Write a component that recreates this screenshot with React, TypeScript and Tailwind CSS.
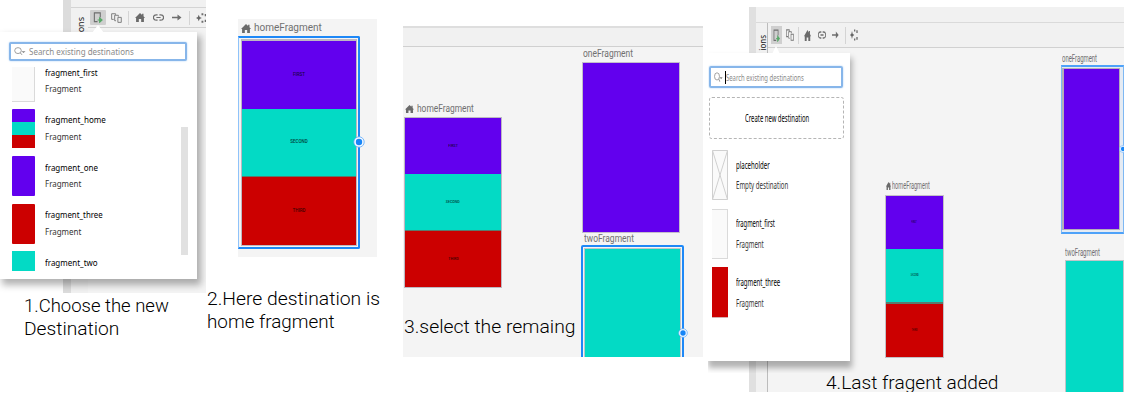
import { useLayoutEffect, useRef } from "react";
import type { ReactNode } from "react";

/* Single line of text stretched or squeezed to fill its box horizontally. */
function Fit({ children, className = "" }: { children: string; className?: string }) {
  const box = useRef<HTMLDivElement>(null);
  const text = useRef<HTMLSpanElement>(null);
  useLayoutEffect(() => {
    if (!box.current || !text.current) return;
    const scale = box.current.clientWidth / text.current.offsetWidth;
    text.current.style.transform = `scaleX(${scale})`;
  }, []);
  return (
    <div ref={box} className={`whitespace-nowrap ${className}`}>
      <span ref={text} className="inline-block origin-left">{children}</span>
    </div>
  );
}

const caption = "h-[22px] font-['Roboto',sans-serif] text-[19px] leading-[22px] font-light text-black";
const nodeLabel = "h-3 font-['Roboto',sans-serif] text-[10px] leading-3 text-[#707070]";

function Home({ className = "" }: { className?: string }) {
  return (
    <svg viewBox="0 0 12 11" preserveAspectRatio="none" className={`shrink-0 fill-[#6a6a6a] ${className}`}>
      <path d="M6 0 8.5 2.4V1H10.2V4L12 6.2H10.7V11H7.4V7.4H4.6V11H1.3V6.2H0Z" />
    </svg>
  );
}

function NewDestination({ className = "" }: { className?: string }) {
  return (
    <svg viewBox="0 0 11 12" preserveAspectRatio="none" fill="none" className={`shrink-0 ${className}`}>
      <path d="M8 6V1H1.5V10.5H5" stroke="#6e6e6e" strokeWidth="1.2" />
      <path d="M5 8.8H9.5M7.3 6.5V11.2L10 8.8Z" stroke="#59a869" strokeWidth="1.2" fill="#59a869" />
    </svg>
  );
}

function Nested({ className = "" }: { className?: string }) {
  return (
    <svg viewBox="0 0 12 11" preserveAspectRatio="none" fill="none" stroke="#777" className={`shrink-0 ${className}`}>
      <path d="M3 7H.7V.8H5V2M4 8.5V2.5H8V4M5.5 8.5H4M7.5 4.8H11.2V10.3H7.5Z" />
    </svg>
  );
}

function LinkIcon({ className = "" }: { className?: string }) {
  return (
    <svg viewBox="0 0 12 8" preserveAspectRatio="none" fill="none" stroke="#6e6e6e" strokeWidth="1.3" className={`shrink-0 ${className}`}>
      <path d="M5 1H3.5A2.8 2.8 0 0 0 3.5 7H5M7 1H8.5A2.8 2.8 0 0 1 8.5 7H7M3.7 4H8.3" />
    </svg>
  );
}

function Arrow({ className = "" }: { className?: string }) {
  return (
    <svg viewBox="0 0 10 8" preserveAspectRatio="none" className={`shrink-0 ${className}`}>
      <path d="M0 3.2H5.5V.5L9.5 4 5.5 7.5V4.8H0Z" fill="#6e6e6e" />
    </svg>
  );
}

function Arrange({ className = "" }: { className?: string }) {
  return (
    <svg viewBox="0 0 12 11" preserveAspectRatio="none" className={`shrink-0 ${className}`}>
      <path d="M3 1.8 4 4.4 6.4 5.5 4 6.6 3 9.2 2 6.6 0 5.5 2 4.4Z" fill="#666" />
      <path d="M6 .4H8V2.4H6ZM9.5 1.2H11.5V3.6H9.5ZM6 8.6H8V10.6H6ZM9.5 7.4H11.5V9.8H9.5Z" fill="#6e6e6e" />
    </svg>
  );
}

function Magnifier({ className = "" }: { className?: string }) {
  return (
    <svg viewBox="0 0 12 10" preserveAspectRatio="none" fill="none" className={`shrink-0 ${className}`}>
      <circle cx="4" cy="4" r="3.3" stroke="#909090" strokeWidth=".9" />
      <path d="M6.3 6.5 8 8.7" stroke="#909090" />
      <path d="M7.5 4.7H11.5L9.5 6.7Z" fill="#808080" />
    </svg>
  );
}

function Handle({ className = "" }: { className?: string }) {
  return (
    <svg viewBox="0 0 12 12" className={`absolute ${className}`}>
      <circle cx="6" cy="6" r="5.2" fill="#f4f8ff" stroke="#5aa9fb" strokeWidth=".8" />
      <circle cx="6" cy="6" r="3.2" fill="#1886f7" />
    </svg>
  );
}

function Bands({ className = "", labels = "", seam = "border-b" }: { className?: string; labels?: string; seam?: string }) {
  return (
    <div className={`flex flex-col ${className}`}>
      <div className="flex flex-1 items-center justify-center bg-[#6200ee]"><span className={labels}>FIRST</span></div>
      <div className={`flex flex-1 items-center justify-center border-[#5b7a6c] bg-[#03dac5] ${seam}`}><span className={labels}>SECOND</span></div>
      <div className="flex flex-1 items-center justify-center bg-[#cc0000]"><span className={labels}>THIRD</span></div>
    </div>
  );
}

const tiny = "font-['Roboto',sans-serif] text-[4.5px] leading-none font-medium text-black/75";

function Row({ thumb, title, width, sub = true }: { thumb: ReactNode; title: string; width: string; sub?: boolean }) {
  return (
    <div className="flex h-[47.5px] shrink-0 gap-[10px] pl-3 font-['Noto_Sans',sans-serif] text-[9.5px]">
      {thumb}
      <div className="flex flex-col pt-[4.5px]">
        <Fit className={`h-[13px] leading-[13px] text-black ${width}`}>{title}</Fit>
        {sub && <Fit className="mt-[3.5px] h-[13px] w-9 leading-[13px] text-[#333]">Fragment</Fit>}
      </div>
    </div>
  );
}

function TallRow({ thumb, title, width, sub, subWidth, className }: { thumb: ReactNode; title: string; width: string; sub: string; subWidth: string; className: string }) {
  return (
    <div className="flex h-[58.5px] shrink-0 gap-2 pl-1 font-['Noto_Sans',sans-serif] text-[10px]">
      {thumb}
      <div className={`flex flex-col ${className}`}>
        <Fit className={`h-3.5 leading-[14px] text-black ${width}`}>{title}</Fit>
        <Fit className={`h-3.5 leading-[14px] text-[#333] ${subWidth}`}>{sub}</Fit>
      </div>
    </div>
  );
}

function ChooseFigure() {
  return (
    <figure className="relative h-full w-[206px] shrink-0">
      <div className="ml-[63px] flex h-[293px] overflow-hidden bg-[#f4f4f4]">
        <div className="w-2 shrink-0 bg-[#dcdcdc]" />
        <div className="flex flex-1 flex-col">
          <div className="h-2 shrink-0 border-b border-[#d4d4d4] bg-[#f1f1f1]" />
          <div className="flex h-full bg-[#f1f1f1]">
            <div className="flex h-[26px] w-[17px] shrink-0 items-start justify-center overflow-hidden pt-[9px] pl-[3px]">
              <span className="rotate-180 font-['Noto_Sans',sans-serif] text-[9px] leading-3 text-[#222] [writing-mode:vertical-rl]">ons</span>
            </div>
            <div className="flex-1">
              <div className="flex h-5 items-center border-b border-[#d1d1d1]">
                <div className="ml-[2px] flex h-[15px] w-4 shrink-0 items-center justify-center rounded-[1px] bg-[#cfcfcf]"><NewDestination className="h-[11px] w-[10px]" /></div>
                <Nested className="ml-[5px] h-[10px] w-[11px]" />
                <div className="ml-[6px] h-[14px] w-px shrink-0 bg-[#d4d4d4]" />
                <Home className="ml-[6px] h-[9px] w-[10px]" />
                <LinkIcon className="ml-2 h-[7px] w-[11px]" />
                <Arrow className="ml-2 h-[7px] w-[10px]" />
                <div className="ml-[7px] h-[14px] w-px shrink-0 bg-[#d4d4d4]" />
                <Arrange className="ml-[6px] h-[10px] w-[11px]" />
              </div>
              <div className="h-full bg-[#f4f4f4]" />
            </div>
          </div>
        </div>
      </div>
      <div className="absolute top-[25px] left-0 h-[268px] w-[206px] overflow-hidden">
        <svg viewBox="0 0 12 8" className="absolute top-0 left-[92px] h-2 w-3 fill-white"><path d="M0 8 6 0 12 8Z" /></svg>
        <div className="mt-[7px] flex h-[247px] w-[197px] flex-col bg-white pt-[10px] shadow-[3px_5px_7px_1px_rgba(0,0,0,0.3)]">
          <div className="ml-[9px] flex h-[19px] w-[178px] shrink-0 items-center rounded-[2px] border-2 border-[#87b6ea] bg-white pl-[3px] shadow-[0_0_2px_#a8cdf5]">
            <Magnifier className="h-[9px] w-3" />
            <Fit className="ml-[3px] w-[105px] font-['Noto_Sans',sans-serif] text-[9.5px] leading-3 text-[#8a8a8a]">Search existing destinations</Fit>
          </div>
          <div className="flex min-h-0 flex-1">
            <div className="mt-[6px] flex h-[205px] w-[181px] shrink-0 flex-col overflow-hidden">
              <div className="-mt-[7px] flex flex-col pt-[1px]">
                <Row title="fragment_first" width="w-[53px]" thumb={<div className="mt-[6px] h-[35px] w-[23px] border-r border-b border-[#dadada] bg-[#fafafa]" />} />
                <Row title="fragment_home" width="w-[61px]" thumb={<Bands className="h-10 w-[23px] overflow-hidden rounded-[1px]" labels="hidden" seam="" />} />
                <Row title="fragment_one" width="w-[53px]" thumb={<div className="h-[39.5px] w-[23px] rounded-[1px] bg-[#6200ee]" />} />
                <Row title="fragment_three" width="w-[58px]" thumb={<div className="h-10 w-[23px] rounded-[1px] bg-[#cc0000]" />} />
                <Row title="fragment_two" width="w-[53px]" sub={false} thumb={<div className="h-[19.5px] w-[23px] bg-[#03dac5]" />} />
              </div>
            </div>
            <div className="mt-[66px] h-[128px] w-[7px] bg-[#e1e1e1]" />
          </div>
        </div>
      </div>
      <figcaption className="mt-[2px] ml-6">
        <Fit className={`w-[145px] ${caption}`}>1.Choose the new</Fit>
        <Fit className={`mt-[1px] w-[95px] ${caption}`}>Destination</Fit>
      </figcaption>
    </figure>
  );
}

function HomeFigure() {
  return (
    <figure className="flex h-full w-[197px] shrink-0 flex-col">
      <div className="mt-[19px] ml-8 h-[238px] w-[139px] bg-[#f4f4f4]">
        <div className="flex h-[16.5px] items-center gap-[3px] pt-[2px] pl-[3px]">
          <Home className="h-[9px] w-[10px]" />
          <Fit className={`w-[68px] ${nodeLabel}`}>homeFragment</Fit>
        </div>
        <div className="relative h-[213px] w-[122px] rounded-r-[2px] border-2 border-l border-[#1e88f7] border-l-[#8fc3fa] pt-[1.5px] pl-[2px]">
          <Bands className="h-[207px] w-[116px] border border-t-2 border-[#bdb8c2]" labels={tiny} />
          <Handle className="top-[98px] -right-[7px] h-3 w-3" />
        </div>
      </div>
      <figcaption className="mt-[31px] ml-[1px]">
        <Fit className={`w-[173px] ${caption}`}>2.Here destination is</Fit>
        <Fit className={`mt-[1px] w-[128px] ${caption}`}>home fragment</Fit>
      </figcaption>
    </figure>
  );
}

function RemainingFigure() {
  return (
    <figure className="mt-[26px] flex h-[331px] w-[300px] shrink-0 flex-col overflow-hidden bg-[#f4f4f4]">
      <div className="h-[21px] shrink-0 border-t-2 border-b border-t-[#dedede] border-b-[#d0d0d0] bg-[#f1f1f1]" />
      <div className="relative flex-1 overflow-hidden">
        <div className="absolute top-[54px] left-[1px]">
          <div className="flex h-4 items-center gap-[3px] pl-[1px]">
            <Home className="h-2 w-[9px]" />
            <Fit className={`w-[57px] ${nodeLabel}`}>homeFragment</Fit>
          </div>
          <Bands className="h-[171px] w-[98px] border border-[#bdb8c2]" labels={`${tiny} scale-x-80 scale-y-85`} />
        </div>
        <div className="absolute top-[1px] left-[179px]">
          <Fit className={`ml-[1px] w-[50px] ${nodeLabel}`}>oneFragment</Fit>
          <div className="mt-[2px] h-[171px] w-[98px] border border-[#c3bdcb] bg-[#6200ee]" />
        </div>
        <div className="absolute top-[186px] left-[178px]">
          <Fit className={`ml-[3px] w-[50px] ${nodeLabel}`}>twoFragment</Fit>
          <div className="relative h-[130px] w-[103px] rounded-[2px] border-2 border-[#1e88f7] pt-[1px] pl-[1px]">
            <div className="h-[130px] w-[97px] border border-[#c2c5c9] bg-[#03dac5]" />
            <Handle className="top-[81px] -right-[6px] h-[10px] w-[10px]" />
          </div>
        </div>
        <figcaption className="absolute top-[269px] left-[1px]">
          <Fit className={`w-[172px] ${caption}`}>3.select the remaing</Fit>
        </figcaption>
      </div>
    </figure>
  );
}

function LastFigure() {
  return (
    <figure className="relative ml-[5px] h-full w-[416px] shrink-0">
      <div className="mt-[7px] ml-[41px] flex h-[385px] overflow-hidden">
        <div className="w-[7px] shrink-0 bg-[#e0e0e0]" />
        <div className="flex min-w-0 flex-1 flex-col">
          <div className="h-4 shrink-0 border-b border-[#dadada] bg-[#f1f1f1]" />
          <div className="flex min-h-0 flex-1">
            <div className="flex w-3 shrink-0 items-start justify-center border-r border-[#bcbcbc] bg-[#f1f1f1] pt-3 pl-[2px]">
              <span className="rotate-180 font-['Noto_Sans',sans-serif] text-[8px] leading-[10px] text-[#222] [writing-mode:vertical-rl]">ions</span>
            </div>
            <div className="flex min-w-0 flex-1 flex-col">
              <div className="flex h-[25px] shrink-0 items-center border-b border-[#d1d1d1] bg-[#f1f1f1]">
                <div className="ml-[3px] flex h-[18px] w-[11px] items-center justify-center bg-[#cfcfcf]"><NewDestination className="h-[13px] w-[7px]" /></div>
                <Nested className="ml-1 h-3 w-2" />
                <div className="ml-1 h-[17px] w-px bg-[#d4d4d4]" />
                <Home className="ml-[5px] h-[11px] w-[7px]" />
                <LinkIcon className="ml-[7px] h-2 w-[8px]" />
                <Arrow className="ml-[6px] h-2 w-[7px]" />
                <div className="ml-[6px] h-[17px] w-px bg-[#d4d4d4]" />
                <Arrange className="ml-1 h-3 w-2" />
              </div>
              <div className="relative flex-1 overflow-hidden bg-[#f4f4f4]">
                <div className="absolute top-[132px] left-[117px]">
                  <div className="flex h-[15px] items-start gap-[1px] pl-[1px]">
                    <Home className="mt-[2px] h-2 w-[5px]" />
                    <Fit className={`w-[38px] ${nodeLabel}`}>homeFragment</Fit>
                  </div>
                  <Bands className="h-[163px] w-[59px] border border-[#c3c0c6]" labels={`${tiny} scale-x-45 scale-y-80`} seam="border-b-2" />
                </div>
                <div className="absolute top-[5px] left-[293px]">
                  <Fit className={`ml-[1px] w-[35px] ${nodeLabel}`}>oneFragment</Fit>
                  <div className="relative h-[169px] w-[63px] border border-y-2 border-[#7eb8f3] border-y-[#4ea2f9] bg-[#e5ebf3] p-[2px] pt-[1px] pr-[3px] pl-0">
                    <div className="h-full w-full border border-l-2 border-[#b3afb9] bg-[#6200ee]" />
                    <Handle className="top-[78px] -right-[4px] h-2 w-2" />
                  </div>
                </div>
                <div className="absolute top-[199px] left-[297px]">
                  <Fit className={`w-[35px] ${nodeLabel}`}>twoFragment</Fit>
                  <div className="mt-[1px] h-[140px] w-[59px] border border-[#c2c5c9] bg-[#03dac5]" />
                </div>
                <figcaption className="absolute top-[324px] left-[58px]">
                  <Fit className={`w-[172px] ${caption}`}>4.Last fragent added</Fit>
                </figcaption>
              </div>
            </div>
          </div>
        </div>
      </div>
      <div className="absolute top-[46px] left-0 h-[327px] w-[153px] overflow-hidden">
        <svg viewBox="0 0 8 8" className="absolute top-0 left-[64px] h-2 w-2 fill-white"><path d="M0 8 4 0 8 8Z" /></svg>
        <div className="mt-[7px] flex h-[308px] w-[142px] flex-col bg-white pt-[13px] shadow-[1px_6px_6px_1px_rgba(0,0,0,0.3)]">
          <div className="ml-[1px] flex h-[22px] w-[134px] shrink-0 items-center rounded-[2px] border-2 border-[#87b6ea] pl-[3px] shadow-[0_0_2px_#a8cdf5]">
            <Magnifier className="h-[11px] w-[9px]" />
            <div className="ml-[2px] h-[13px] w-px bg-black" />
            <Fit className="w-[78px] pt-[1px] font-['Noto_Sans',sans-serif] text-[9.5px] leading-3 text-[#8a8a8a]">Search existing destinations</Fit>
          </div>
          <div className="mt-[9px] ml-[1px] flex h-[42px] w-[135px] shrink-0 items-center justify-center rounded-[3px] border border-dashed border-[#b5b5b5] font-['Noto_Sans',sans-serif] text-[10px] leading-3">
            <Fit className="w-16 text-black">Create new destination</Fit>
          </div>
          <div className="mt-[11px] flex flex-col">
            <TallRow title="placeholder" width="w-[34px]" sub="Empty destination" subWidth="w-[52px]" className="gap-[6px] pt-[8px]" thumb={
              <svg viewBox="0 0 16 50" className="h-[50px] w-4 fill-[#fafafa] stroke-[#d0d0d0]"><path d="M.5.5H15.5V49.5H.5ZL15.5 49.5M15.5.5.5 49.5" /></svg>
            } />
            <TallRow title="fragment_first" width="w-[39px]" sub="Fragment" subWidth="w-7" className="gap-[7px] pt-[7px]" thumb={<div className="h-[50px] w-4 border border-l-0 border-[#dadada] bg-[#fafafa]" />} />
            <TallRow title="fragment_three" width="w-11" sub="Fragment" subWidth="w-7" className="gap-[7px] pt-[8px]" thumb={<div className="h-[51px] w-4 border-b border-[#d6b0b0] bg-[#cc0000]" />} />
          </div>
        </div>
      </div>
    </figure>
  );
}

export default function App() {
  return (
    <main className="flex h-[406px] w-[1126px] overflow-hidden bg-white">
      <ChooseFigure />
      <HomeFigure />
      <RemainingFigure />
      <LastFigure />
    </main>
  );
}
